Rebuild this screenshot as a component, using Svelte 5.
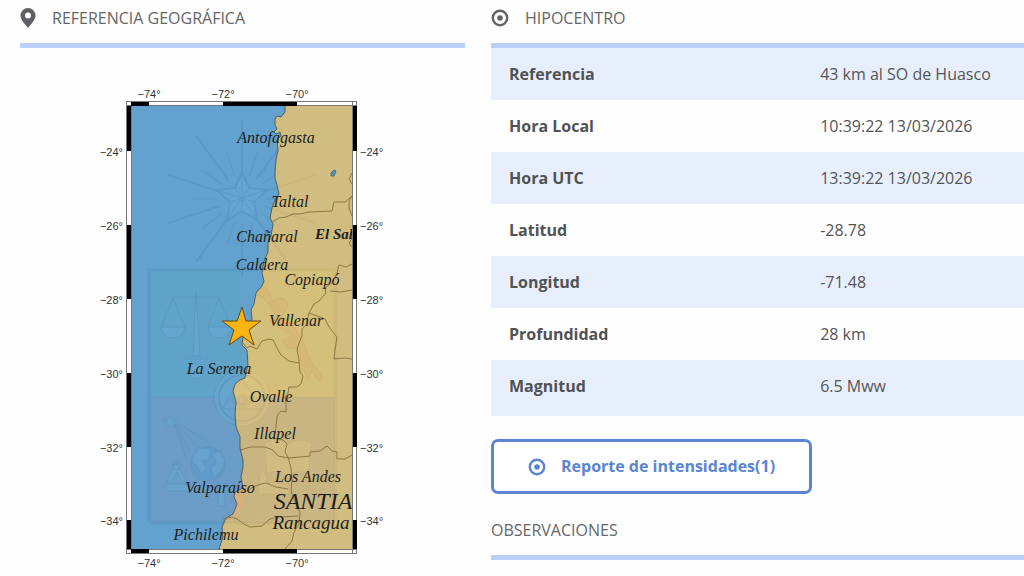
<script lang="ts">
  type Place = { name: string; x: number; y: number; cls?: string };

  const rows = [
    { label: "Referencia", value: "43 km al SO de Huasco" },
    { label: "Hora Local", value: "10:39:22 13/03/2026" },
    { label: "Hora UTC", value: "13:39:22 13/03/2026" },
    { label: "Latitud", value: "-28.78" },
    { label: "Longitud", value: "-71.48" },
    { label: "Profundidad", value: "28 km" },
    { label: "Magnitud", value: "6.5 Mww" },
  ];

  const places: Place[] = [
    { name: "Antofagasta", x: 276, y: 143 },
    { name: "Taltal", x: 290, y: 207 },
    { name: "Chañaral", x: 267, y: 242 },
    { name: "El Sal", x: 334, y: 239, cls: "strong" },
    { name: "Caldera", x: 262, y: 270 },
    { name: "Copiapó", x: 312, y: 285 },
    { name: "Vallenar", x: 296, y: 326 },
    { name: "La Serena", x: 219, y: 374 },
    { name: "Ovalle", x: 271, y: 402 },
    { name: "Illapel", x: 275, y: 439 },
    { name: "Los Andes", x: 308, y: 482 },
    { name: "Valparaíso", x: 220, y: 493 },
    { name: "SANTIA", x: 313, y: 509, cls: "capital" },
    { name: "Rancagua", x: 311, y: 529, cls: "city" },
    { name: "Pichilemu", x: 206, y: 540 },
  ];

  const lons = [
    { deg: 74, x: 149 },
    { deg: 72, x: 223 },
    { deg: 70, x: 297 },
  ];
  const lats = [
    { deg: 24, y: 151 },
    { deg: 26, y: 225 },
    { deg: 28, y: 299 },
    { deg: 30, y: 373 },
    { deg: 32, y: 447 },
    { deg: 34, y: 520 },
  ];

  // tramos negros del marco: [inicio, largo]
  const lonBars = [[131, 18], [223, 74]];
  const latBars = [[106, 45], [225, 74], [373, 74], [520, 29]];

  // rayos de la estrella: largos y cortos alternados
  const rays = Array.from({ length: 20 }, (_, i) => ({
    angle: i * 18,
    end: i % 2 === 0 ? -78 : -49,
    width: i % 2 === 0 ? 2 : 1,
  }));

  const coast =
    "M285 106L285 112L281 117L277 116L275 119L275 125L277 129L274 132L276 134L280 132L281 136L277 139L278 150L276 160L275 171L275 178L277 185L279 194L275 200L272 208L270 218L273 224L271 236L268 243L268 252L264 261L262 273L264 281L262 286L256 293L254 304L251 310L252 319L249 328L243 338L242 345L247 350L248 365L245 378L240 380L235 384L233 391L236 402L235 414L236 427L240 437L240 448L243 460L243 467L241 477L243 488L235 492L234 497L237 504L233 514L226 518L222 527L223 537L219 549";

  const borders = [
    "M272 222L279 218L286 217L293 214L300 214L309 212L332 211L334 202L345 202L352 196",
    "M352 173L349 179L352 184M352 196L349 201L349 208L352 216M352 238L349 243L352 247",
    "M352 264L346 267L339 265L337 273L333 282L325 288L326 293L319 301L314 304L309 313L306 325L302 329L302 336L299 343L297 350L299 360L300 372L303 376L301 384L297 387L289 387L288 393L285 397L286 404L286 412L281 411L277 416L276 427L274 438L283 440L287 444L285 452L288 457L291 468L292 480L291 491L295 502L300 512L299 524L294 532L292 541L285 549",
    "M330 291L341 292L352 290M309 313L317 316L325 319L328 325L332 331L337 337L335 350L334 359L345 358L352 359",
    "M242 342L247 348L250 346L257 349L262 341L269 339L273 340L277 348L281 355L289 361L299 363",
    "M241 450L250 447L265 447L273 450L278 456L289 458L310 456L310 452L320 451L327 446L332 451L337 452L337 459L345 459L352 455",
    "M242 491L247 491L253 487L261 484L266 483L276 487L288 489",
    "M223 519L232 517L237 519L244 524L250 527L262 526L270 519L279 517L298 516",
  ];
</script>

{#snippet target()}
  <svg class="target" viewBox="0 0 18 18" aria-hidden="true">
    <circle cx="9" cy="9" r="7.2" fill="none" stroke="currentColor" stroke-width="2.4" />
    <circle cx="9" cy="9" r="2.8" fill="currentColor" />
  </svg>
{/snippet}

{#snippet emblem()}
  <!-- estrella superior con sus rayos -->
  <g transform="translate(242 199)">
    {#each rays as ray}
      <path d="M0 -24V{ray.end}" transform="rotate({ray.angle})" stroke-width={ray.width} />
    {/each}
    <path d="M0 -27L7 -11L25 -9L12 3L15 21L0 12L-15 21L-12 3L-25 -9L-7 -11Z" class="tint" stroke-width="2" />
    <path d="M0 -27V12M-25 -9L12 3M25 -9L-12 3M-15 21L7 -11M15 21L-7 -11" />
  </g>
  <!-- escudo dividido en cuarteles -->
  <path d="M149 270H335V518Q335 523 330 523H154Q149 523 149 518Z" stroke-width="3" />
  <path d="M150 397H334" />
  <!-- balanza -->
  <path d="M172 297H221M173 298L161 327M173 298L185 327M219 298L208 327M219 298L231 327" />
  <path d="M161 327H185Q183 338 173 338Q163 338 161 327ZM208 327H232Q230 338 220 338Q210 338 208 327ZM196 290L193 356H200ZM184 357H208V359H184Z" class="tint" />
  <circle cx="196" cy="371" r="8" class="tint" />
  <!-- ojo en el triángulo central -->
  <circle cx="242" cy="398" r="28" class="tint" />
  <circle cx="242" cy="398" r="23" stroke-width="2" />
  <path d="M242 379L222 409H262ZM231 400Q242 389 253 400Q242 410 231 400Z" />
  <circle cx="242" cy="400" r="4" />
  <!-- cometa, globo y compás -->
  <path d="M170 415L172 420L177 420L173 423L175 428L170 425L166 428L167 423L163 420L168 420Z" class="tint" />
  <path d="M175 424L186 457M177 424L197 447M178 423L208 442M176 426L190 451" />
  <circle cx="208" cy="464" r="17" class="globe" />
  <path d="M193 456L198 448L207 448L211 452L208 460L202 461L206 468L202 475L197 466L192 462ZM212 454L219 451L225 460L221 472L213 477L211 467L217 462Z" class="tint" />
  <path d="M166 482L176 463L187 482L182 482L177 472L171 482ZM166 484H191V491H166ZM218 483H225V506H218Z" class="tint" />
  <circle cx="177" cy="466" r="4" />
{/snippet}

<svelte:head>
  <title>Hipocentro</title>
</svelte:head>

<main class="informe">
  <section>
    <h2>
      <svg class="pin" viewBox="0 0 16 20" aria-hidden="true">
        <path fill="currentColor" fill-rule="evenodd" d="M8 0A7.5 7.5 0 0 0 .5 7.5C.5 12 5 16 8 20C11 16 15.5 12 15.5 7.5A7.5 7.5 0 0 0 8 0ZM8 4.5A3 3 0 1 1 8 10.5A3 3 0 0 1 8 4.5Z" />
      </svg>
      REFERENCIA GEOGRÁFICA
    </h2>

    <svg class="mapa" viewBox="92 80 301 492" role="img" aria-label="Mapa del epicentro">
      <defs>
        <clipPath id="interior"><rect x="131" y="106" width="222" height="443" /></clipPath>
        <clipPath id="tierra"><path d="{coast}H353V106Z" /></clipPath>
      </defs>

      <g clip-path="url(#interior)">
        <rect x="131" y="106" width="222" height="443" fill="#63a2cf" />
        <rect x="149" y="270" width="93" height="127" fill="#60a3c9" />
        <path d="M149 397H250V523H154Q149 523 149 518Z" fill="#6b9cc7" />
        <g class="emblem sea">{@render emblem()}</g>

        <path d="{coast}H353V106Z" fill="#d1bd80" />
        <g clip-path="url(#tierra)">
          <rect x="200" y="270" width="135" height="127" fill="#d4c07b" />
          <rect x="200" y="397" width="135" height="126" fill="#c9b682" />
          <g class="emblem land">
            {@render emblem()}
            <path d="M264 443Q276 436 288 444Q300 436 312 443L308 474Q298 469 288 475Q277 469 267 474ZM260 474L264 470L267 482L289 485V494H258Z" class="tint" />
          </g>
          <path d="M237 486L243 486L243 505L234 517L223 519Z" fill="#d8b07b" />
          <g class="copihue">
            <path d="M257 290L266 287L270 295L273 302L268 304L263 297L257 295Z" />
            <path d="M270 306Q274 295 284 299Q292 306 282 315L294 327L303 341L309 358L323 378L320 382L311 371L308 380L301 363L299 349L288 348L283 341L292 335L279 328L269 321L275 314Z" />
          </g>
        </g>

        <path d={coast} class="coast" />
        {#each borders as d}
          <path {d} class="border" />
        {/each}
        <path d="M331 173L334 170L336 171L334 176L331 176Z" fill="#4e94b4" stroke="#50747a" />

        {#each places as p}
          <text class="place {p.cls ?? ''}" x={p.x} y={p.y}>{p.name}</text>
        {/each}
      </g>

      <path d="M242 307L246 321H261L249 330L254 345L242 336L229 345L234 330L222 321H237Z" fill="#fbb40d" stroke="#5c4a20" />

      <g fill="none" stroke="#777">
        <rect x="126.5" y="101.5" width="230" height="452" />
        <path d="M131.5 101.5V553.5M352.5 101.5V553.5M126.5 105.5H356.5M126.5 549.5H356.5" />
      </g>
      {#each lonBars as [x, len]}
        <rect {x} y="102" width={len} height="4" />
        <rect {x} y="549" width={len} height="4" />
      {/each}
      {#each latBars as [y, len]}
        <rect x="127" {y} width="4" height={len} />
        <rect x="353" {y} width="4" height={len} />
      {/each}

      {#each lons as { deg, x }}
        <text class="deg mid" {x} y="98">−{deg}°</text>
        <text class="deg mid" {x} y="567">−{deg}°</text>
      {/each}
      {#each lats as { deg, y }}
        <text class="deg end" x="123" y={y + 5}>−{deg}°</text>
        <text class="deg" x="360" y={y + 5}>−{deg}°</text>
      {/each}
    </svg>
  </section>

  <section>
    <h2>{@render target()} HIPOCENTRO</h2>
    <table>
      <tbody>
        {#each rows as row (row.label)}
          <tr>
            <th scope="row">{row.label}</th>
            <td>{row.value}</td>
          </tr>
        {/each}
      </tbody>
    </table>

    <button type="button" class="reporte">{@render target()} Reporte de intensidades(1)</button>

    <h2>OBSERVACIONES</h2>
  </section>
</main>

<style>
  :global(body) {
    margin: 0;
    background: #fefefe;
  }
  .informe {
    display: grid;
    grid-template-columns: 445fr 533fr;
    column-gap: 26px;
    padding-left: 20px;
    font-family: "Open Sans", "Noto Sans", sans-serif;
    font-size: 16px;
    color: #555;
  }
  h2 {
    display: flex;
    align-items: center;
    gap: 16px;
    box-sizing: border-box;
    height: 48px;
    margin: 0;
    padding-bottom: 8px;
    border-bottom: 5px solid #bbd0f8;
    font-size: 16px;
    font-weight: 400;
    color: #666;
  }
  .pin {
    width: 16px;
    height: 20px;
    color: #5f6063;
  }
  .target {
    width: 18px;
    height: 18px;
    flex-shrink: 0;
  }
  table {
    width: 100%;
    table-layout: fixed;
    border-collapse: collapse;
  }
  th,
  td {
    height: 52px;
    padding: 0 0 0 18px;
    text-align: left;
  }
  th {
    width: 55%;
    font-weight: 700;
    color: #505254;
  }
  tr:nth-child(odd) { background: #e7effd; }
  tr:last-child > * { padding-bottom: 4px; }
  .reporte {
    display: flex;
    align-items: center;
    gap: 15px;
    margin: 23px 0 18px;
    padding: 13px 34px;
    border: 3px solid #5b85d3;
    border-radius: 7px;
    background: #fff;
    font: inherit;
    font-weight: 700;
    line-height: 23px;
    color: #5b85d3;
    cursor: pointer;
  }
  .reporte:hover { background: #e7effd; }

  .mapa {
    display: block;
    width: 301px;
    max-width: 100%;
    margin: 32px auto 0;
  }
  .emblem {
    fill: none;
    stroke-width: 1;
  }
  .sea { stroke: #5593bd; opacity: 0.55; }
  .land { stroke: #c1aa73; opacity: 0.35; }
  .sea .tint { fill: #68aad2; }
  .sea .globe { fill: #5b9bd0; }
  .land .tint { fill: #dcc988; }
  .copihue {
    fill: #d9ac6d;
    stroke: #c8996a;
    opacity: 0.35;
  }
  .coast {
    fill: none;
    stroke: #4f5f5c;
  }
  .border {
    fill: none;
    stroke: #8c7844;
  }
  .place {
    font-family: "Liberation Serif", serif;
    font-size: 16px;
    font-style: italic;
    text-anchor: middle;
    fill: #1d1d1b;
  }
  .place.strong {
    font-size: 15px;
    font-weight: 700;
  }
  .place.capital { font-size: 24px; }
  .place.city { font-size: 19px; }
  .deg {
    font-family: "Liberation Sans", sans-serif;
    font-size: 11px;
    fill: #333;
  }
  .mid { text-anchor: middle; }
  .end { text-anchor: end; }
</style>
